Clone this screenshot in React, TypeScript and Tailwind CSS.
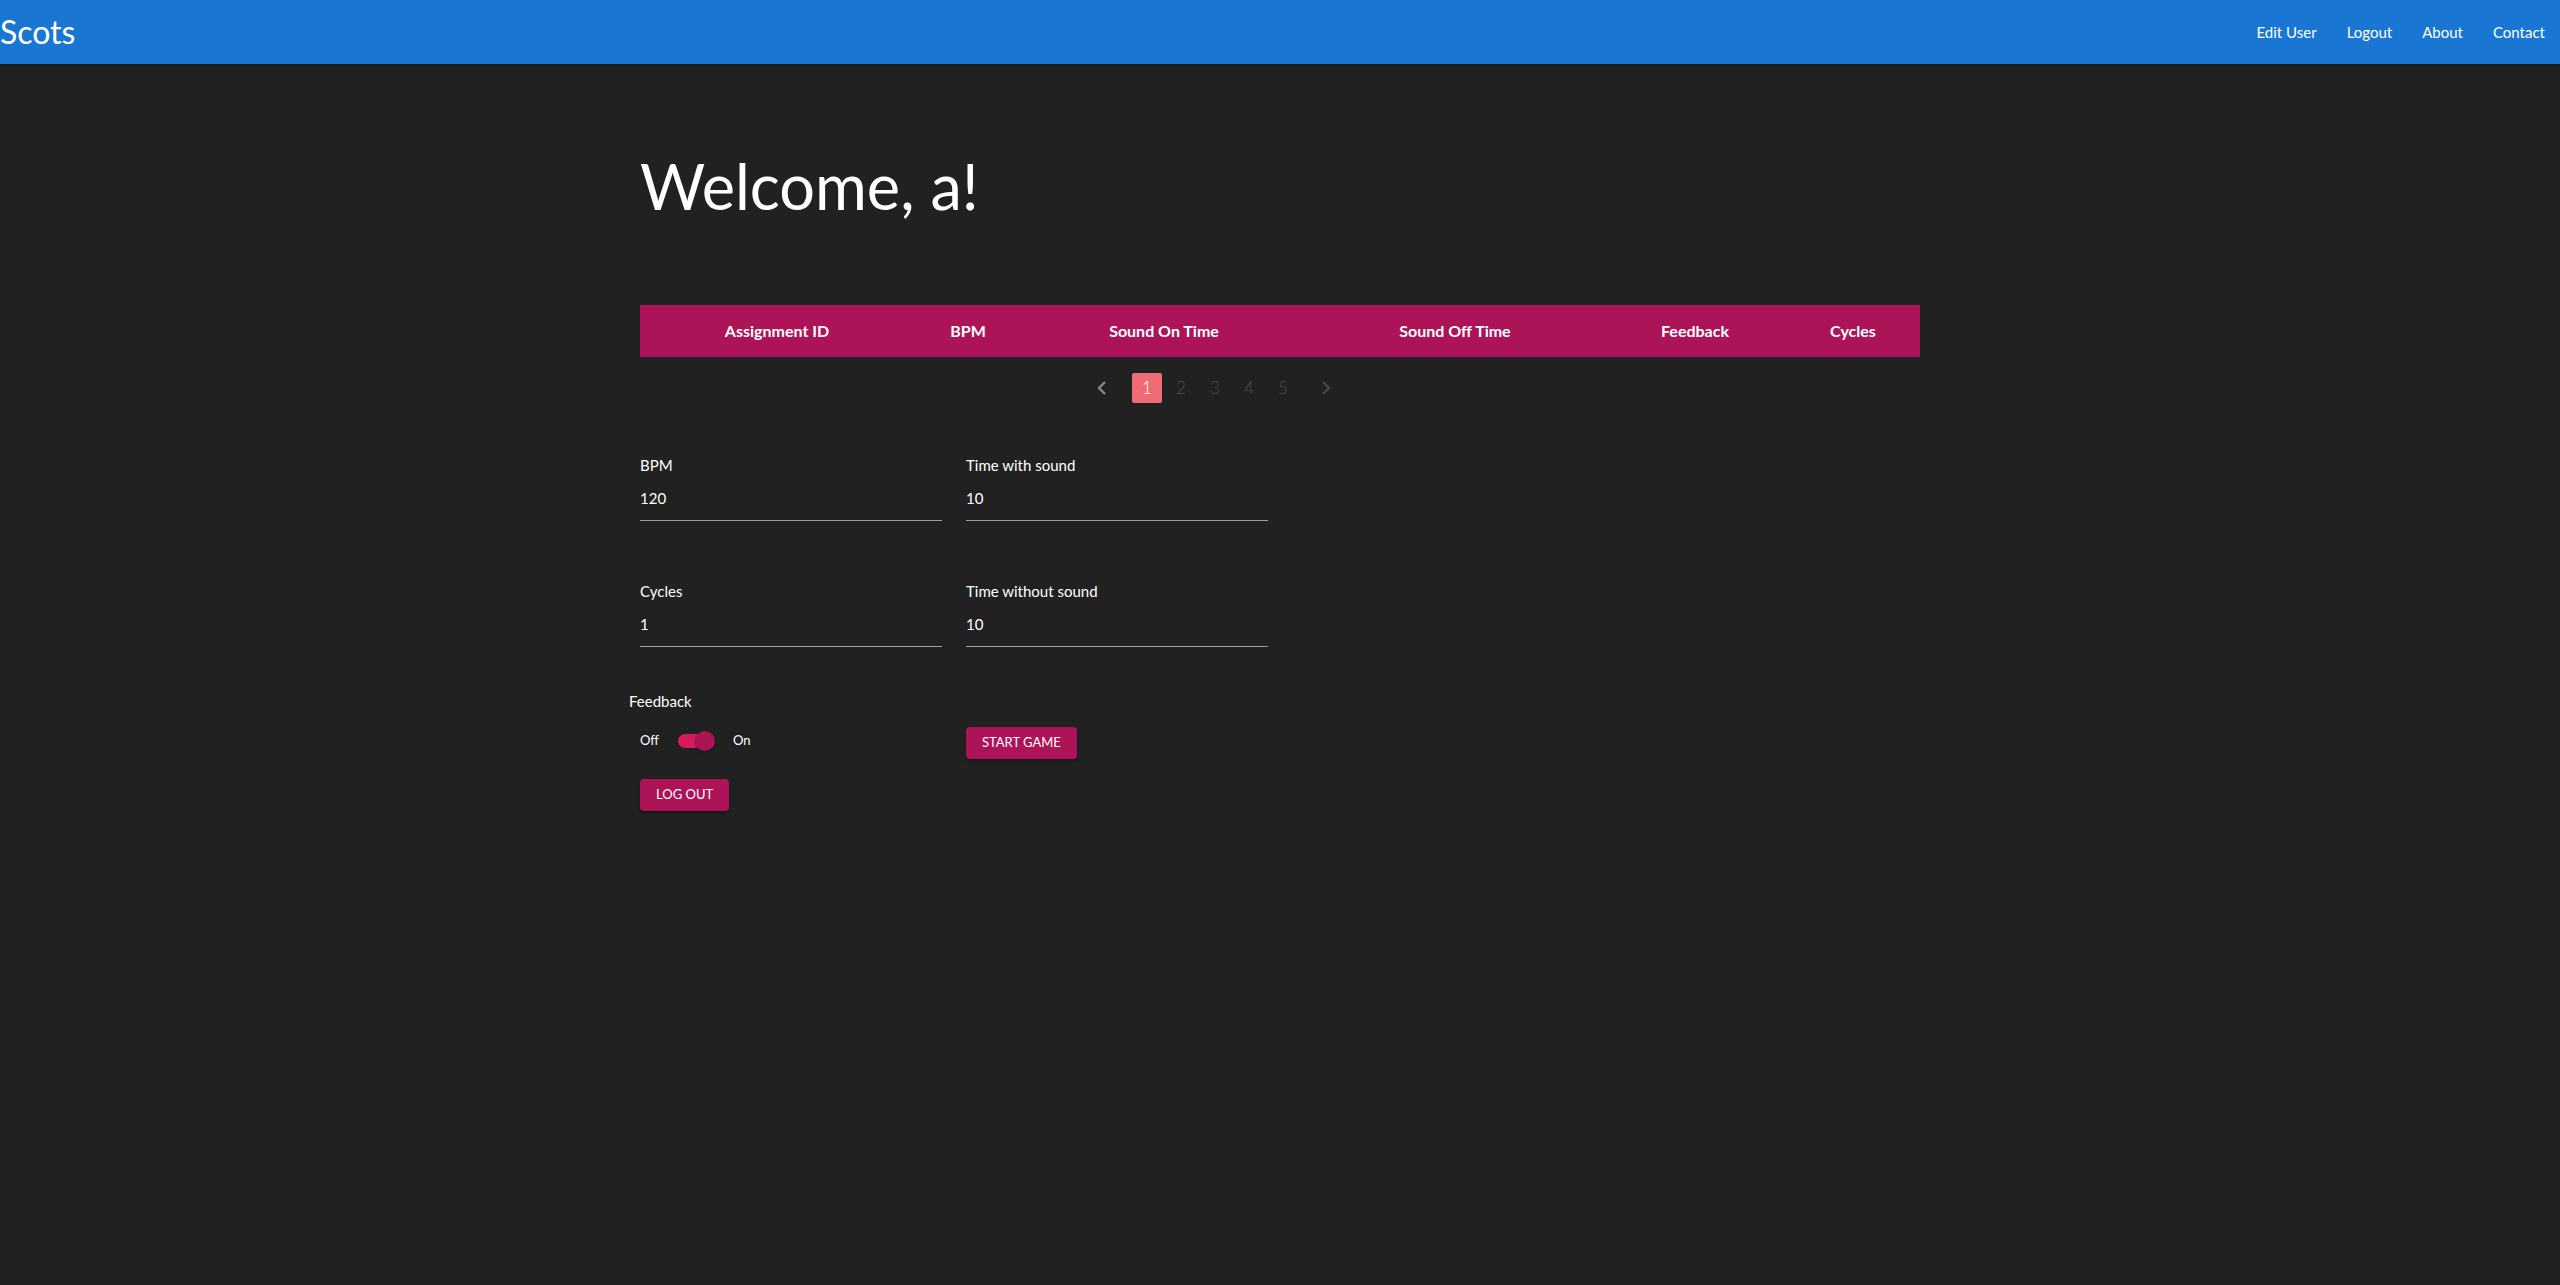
import React from "react";

const font = { fontFamily: '"Lato", "Open Sans", sans-serif' };

function Field({ label, value }: { label: string; value: string }) {
  return (
    <div className="flex flex-col w-[302px]">
      <label className="text-[15px] leading-[20px] text-white">{label}</label>
      <div className="mt-[13px] pb-[12px] border-b border-[#a0a0a0] text-[15px] leading-[20px] text-white">
        {value}
      </div>
    </div>
  );
}

export default function App() {
  const cols = [
    { name: "Assignment ID", w: "w-[274px]" },
    { name: "BPM", w: "w-[108px]" },
    { name: "Sound On Time", w: "w-[284px]" },
    { name: "Sound Off Time", w: "w-[298px]" },
    { name: "Feedback", w: "w-[182px]" },
    { name: "Cycles", w: "w-[134px]" },
  ];
  return (
    <div className="min-h-[1285px] bg-[#212121] text-white" style={font}>
      <header className="h-[64px] bg-[#1976d2] flex items-center justify-between shadow-[0_2px_4px_rgba(0,0,0,0.3)]">
        <div className="text-[32px] leading-none text-white">Scots</div>
        <nav className="flex items-center text-[15px] text-white">
          <a className="px-[15px]">Edit User</a>
          <a className="px-[15px]">Logout</a>
          <a className="px-[15px]">About</a>
          <a className="px-[15px]">Contact</a>
        </nav>
      </header>

      <main className="mx-auto w-[1280px]">
        <h1 className="mt-[90px] text-[63px] leading-none font-normal text-white">Welcome, a!</h1>

        <div className="mt-[88px] h-[52px] bg-[#ad1457] flex items-center">
          {cols.map((c) => (
            <div key={c.name} className={`${c.w} text-center text-[16px] font-bold text-white`}>
              {c.name}
            </div>
          ))}
        </div>

        <div className="mt-[16px] flex items-center gap-[4px] ml-[447px]">
          <div className="w-[30px] h-[30px] flex items-center justify-center mr-[11px]">
            <svg width="10" height="14" viewBox="0 0 10 14">
              <polyline points="8,1 2,7 8,13" fill="none" stroke="#7c8a98" strokeWidth="2.4" />
            </svg>
          </div>
          <div className="w-[30px] h-[30px] rounded-[2px] bg-[#ef6c74] flex items-center justify-center text-[17px] font-light text-white">
            1
          </div>
          {["2", "3", "4", "5"].map((n) => (
            <div key={n} className="w-[30px] h-[30px] flex items-center justify-center text-[17px] font-light text-[#4d4d4d]">
              {n}
            </div>
          ))}
          <div className="w-[30px] h-[30px] flex items-center justify-center ml-[9px]">
            <svg width="10" height="14" viewBox="0 0 10 14">
              <polyline points="2,1 8,7 2,13" fill="none" stroke="#474747" strokeWidth="2.4" />
            </svg>
          </div>
        </div>

        <div className="mt-[52px] grid grid-cols-[302px_302px] gap-x-[24px] gap-y-[60px] w-max">
          <Field label="BPM" value="120" />
          <Field label="Time with sound" value="10" />
          <Field label="Cycles" value="1" />
          <Field label="Time without sound" value="10" />
        </div>

        <div className="mt-[44px] ml-[-11px] text-[15px] leading-[20px] text-white">Feedback</div>

        <div className="mt-[16px] grid grid-cols-[302px_302px] gap-x-[24px] w-max">
          <div className="flex items-center h-[28px] text-[13px] text-white">
            <span>Off</span>
            <div className="relative ml-[19px] w-[34px] h-[14px] rounded-full bg-[#d81b60]">
              <div className="absolute right-[-3px] top-[-3px] w-[20px] h-[20px] rounded-full bg-[#ad1457] shadow-[0_1px_3px_rgba(0,0,0,0.4)]" />
            </div>
            <span className="ml-[21px]">On</span>
          </div>
          <div>
            <button className="h-[32px] px-[16px] rounded-[4px] bg-[#ad1457] text-white text-[13px] uppercase shadow-[0_2px_3px_rgba(0,0,0,0.35)]">
              Start Game
            </button>
          </div>
        </div>

        <div className="mt-[20px]">
          <button className="h-[32px] px-[16px] rounded-[4px] bg-[#ad1457] text-white text-[13px] uppercase shadow-[0_2px_3px_rgba(0,0,0,0.35)]">
            Log Out
          </button>
        </div>
      </main>
    </div>
  );
}
